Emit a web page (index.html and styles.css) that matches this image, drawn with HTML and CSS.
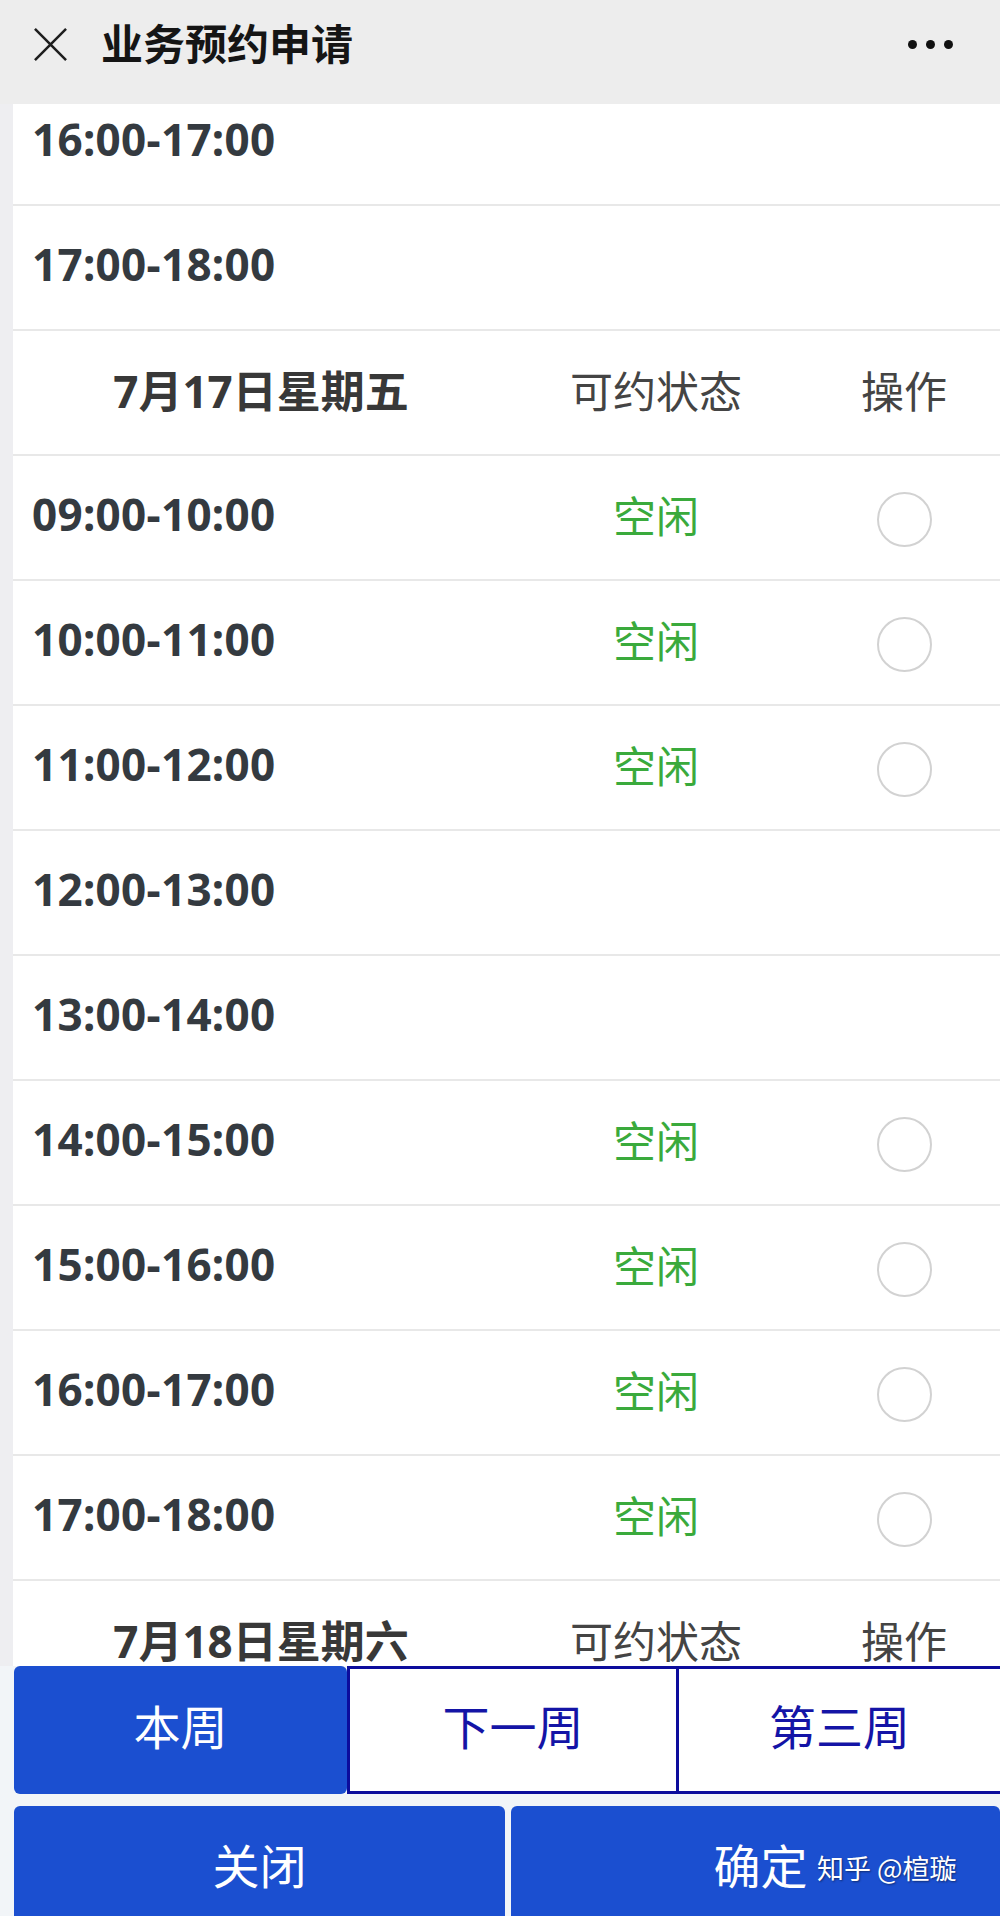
FILE: index.html
```html
<!DOCTYPE html>
<html lang="zh-CN">
<head>
<meta charset="utf-8">
<title>业务预约申请</title>
<link rel="stylesheet" href="styles.css">
</head>
<body>
<div class="app">
  <header class="topbar">
    <svg class="close" viewBox="0 0 36 36" aria-hidden="true">
      <path d="M2 2 L34 34 M34 2 L2 34" />
    </svg>
    <h1 class="title">业务预约申请</h1>
    <div class="more"><span></span><span></span><span></span></div>
  </header>

  <main class="viewport">
    <div class="list">
      <div class="row"><div class="time">16:00-17:00</div><div class="status"></div><div class="op"></div></div>
      <div class="row"><div class="time">17:00-18:00</div><div class="status"></div><div class="op"></div></div>

      <div class="row head"><div class="date">7月17日星期五</div><div class="label">可约状态</div><div class="label op-label">操作</div></div>
      <div class="row"><div class="time">09:00-10:00</div><div class="status">空闲</div><div class="op"><span class="radio"></span></div></div>
      <div class="row"><div class="time">10:00-11:00</div><div class="status">空闲</div><div class="op"><span class="radio"></span></div></div>
      <div class="row"><div class="time">11:00-12:00</div><div class="status">空闲</div><div class="op"><span class="radio"></span></div></div>
      <div class="row"><div class="time">12:00-13:00</div><div class="status"></div><div class="op"></div></div>
      <div class="row"><div class="time">13:00-14:00</div><div class="status"></div><div class="op"></div></div>
      <div class="row"><div class="time">14:00-15:00</div><div class="status">空闲</div><div class="op"><span class="radio"></span></div></div>
      <div class="row"><div class="time">15:00-16:00</div><div class="status">空闲</div><div class="op"><span class="radio"></span></div></div>
      <div class="row"><div class="time">16:00-17:00</div><div class="status">空闲</div><div class="op"><span class="radio"></span></div></div>
      <div class="row"><div class="time">17:00-18:00</div><div class="status">空闲</div><div class="op"><span class="radio"></span></div></div>

      <div class="row head"><div class="date">7月18日星期六</div><div class="label">可约状态</div><div class="label op-label">操作</div></div>
    </div>
  </main>

  <footer class="footer">
    <nav class="weeks">
      <div class="week active">本周</div>
      <div class="week next">下一周</div>
      <div class="week third">第三周</div>
    </nav>
    <div class="actions">
      <div class="btn">关闭</div>
      <div class="btn confirm">确定<span class="watermark">知乎 @楦璇</span></div>
    </div>
  </footer>
</div>
</body>
</html>
```

FILE: styles.css
```css
html, body {
  margin: 0;
  padding: 0;
  height: 1916px;
  overflow: hidden;
  background: #eeeef1;
}

.app {
  width: 1000px;
  height: 1916px;
  display: flex;
  flex-direction: column;
  overflow: hidden;
  font-family: "Noto Sans", "Noto Sans CJK SC", sans-serif;
}

/* top bar */
.topbar {
  flex: none;
  height: 104px;
  box-sizing: border-box;
  padding: 0 0 15px 33px;
  background: #ededed;
  display: flex;
  align-items: center;
  position: relative;
  z-index: 2;
}

.close {
  width: 35px;
  height: 35px;
  flex: none;
}

.close path {
  stroke: #1e1e1e;
  stroke-width: 2.6;
  fill: none;
}

.title {
  margin: 0 0 6px 33px;
  font-family: "Noto Sans CJK SC", sans-serif;
  font-size: 42px;
  line-height: 1;
  font-weight: 700;
  color: #151515;
}

.more {
  margin-left: auto;
  margin-right: 47px;
  display: flex;
  gap: 9px;
}

.more span {
  width: 9px;
  height: 9px;
  border-radius: 50%;
  background: #111;
}

/* list */
.viewport {
  flex: none;
  height: 1562px;
  overflow: hidden;
  padding-left: 13px;
  background: #eeeef1;
}

.list {
  margin-top: -23px;
  background: #fff;
}

.row {
  display: grid;
  grid-template-columns: 496px 294px 1fr;
  align-items: center;
  box-sizing: border-box;
  height: 125px;
  padding-bottom: 8px;
  border-bottom: 2px solid #e8e8e8;
}

.time {
  padding-left: 19px;
  font-family: "Noto Sans", "Noto Sans CJK SC", sans-serif;
  font-weight: 700;
  font-size: 44px;
  color: #343a40;
  letter-spacing: 0.3px;
}

.status {
  text-align: center;
  font-family: "Noto Sans CJK SC", sans-serif;
  font-size: 43px;
  color: #3aaa3c;
}

.op {
  display: flex;
  justify-content: center;
  padding-left: 5px;
}

.radio {
  width: 55px;
  height: 55px;
  box-sizing: border-box;
  border: 2px solid #d2d2d2;
  border-radius: 50%;
  margin-top: 12px;
}

.head .date {
  text-align: center;
  font-family: "Noto Sans", "Noto Sans CJK SC", sans-serif;
  font-weight: 700;
  font-size: 44px;
  color: #383838;
}

.head .label {
  text-align: center;
  font-family: "Noto Sans CJK SC", sans-serif;
  font-size: 43px;
  color: #444;
}

.head .op-label {
  padding-left: 5px;
}

/* footer */
.footer {
  flex: none;
  padding-left: 14px;
  background: #f2f5f8;
  position: relative;
}

.weeks {
  display: grid;
  grid-template-columns: 333px 330px 1fr;
  height: 128px;
}

.week {
  display: flex;
  align-items: center;
  justify-content: center;
  box-sizing: border-box;
  padding-bottom: 12px;
  font-family: "Noto Sans CJK SC", sans-serif;
  font-size: 47px;
  background: #fff;
  color: #1414a6;
  border-top: 3px solid #0c0c9c;
  border-bottom: 3px solid #0c0c9c;
}

.week.active {
  background: #1b4fd0;
  color: #fff;
  border: none;
  border-radius: 6px;
}

.week.next {
  border-left: 3px solid #0c0c9c;
  border-right: 1px solid #0c0c9c;
}

.week.third {
  border-left: 2px solid #0c0c9c;
}

.actions {
  margin-top: 12px;
  display: grid;
  grid-template-columns: 491px 1fr;
  gap: 6px;
  height: 122px;
}

.btn {
  position: relative;
  display: flex;
  align-items: center;
  justify-content: center;
  box-sizing: border-box;
  padding-bottom: 8px;
  background: #1b4fd0;
  color: #fff;
  border-radius: 6px 6px 0 0;
  font-family: "Noto Sans CJK SC", sans-serif;
  font-size: 47px;
}

.btn.confirm {
  padding-left: 10px;
}

.watermark {
  position: absolute;
  left: 306px;
  top: 50%;
  transform: translateY(-50%);
  font-size: 27px;
  color: #fff;
  text-shadow: 1px 1px 2px rgba(0, 0, 0, 0.45);
  white-space: nowrap;
}
```
